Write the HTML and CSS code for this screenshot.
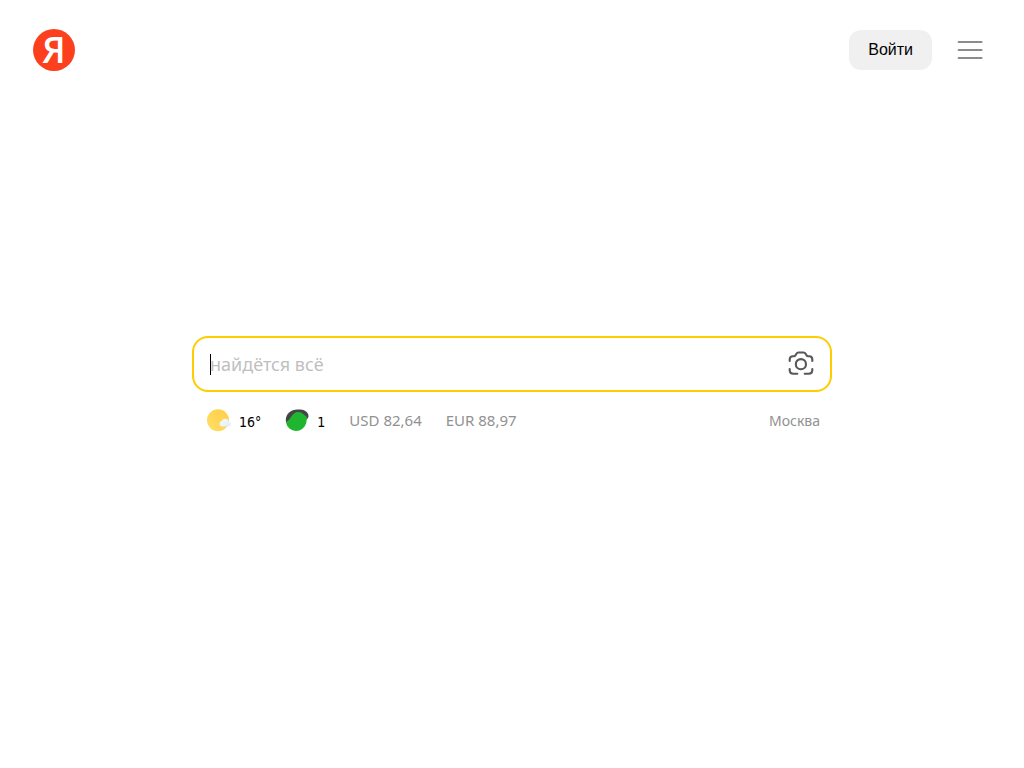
FILE: index.html
```html
<!DOCTYPE html>
<html lang="ru">
<head>
<meta charset="UTF-8">
<meta name="viewport" content="width=device-width, initial-scale=1.0">
<title>Яндекс</title>
<link rel="stylesheet" href="styles.css">
</head>
<body>

<header class="header">
    <a class="logo" href="#">Я</a>
    <div class="header-actions">
        <button class="login-btn" type="button">Войти</button>
        <button class="menu-btn" type="button" aria-label="Меню">
            <svg width="26" height="20" viewBox="0 0 26 20" fill="none" stroke="#8c8c8c" stroke-width="2.2" stroke-linecap="round">
                <path d="M1.700 2h22.800M1.700 10h22.800M1.700 18h22.800"/>
            </svg>
        </button>
    </div>
</header>

<main class="main">
    <form class="search" action="#">
        <span class="caret"></span>
        <input class="search-input" type="text" name="text" placeholder="найдётся всё" aria-label="Запрос" autocomplete="off">
        <button class="camera-btn" type="button" aria-label="Поиск по картинке">
            <svg width="26" height="26" viewBox="0 0 26 26" fill="none" stroke="#575757" stroke-width="2.1" stroke-linecap="round" stroke-linejoin="round">
                <path d="M1.700 10V8.500c0-2 1.200-3.300 3.200-3.300h1c.8 0 1.200-.3 1.600-1l.9-1.400c.5-.8 1.100-1.300 2-1.300h5.200c.9 0 1.500.5 2 1.300l.9 1.400c.4.7.8 1 1.600 1h1c2 0 3.200 1.300 3.200 3.300V10"/>
                <path d="M1.700 18v1c0 2.600 1.300 3.800 3.800 3.800H9.300M24.300 18v1c0 2.600-1.300 3.800-3.800 3.800H16.700"/>
                <circle cx="12.900" cy="13.200" r="5.100"/>
            </svg>
        </button>
    </form>

    <div class="informers">
        <a class="informer" href="#">
            <svg width="24" height="24" viewBox="0 0 24 24">
                <defs>
                    <linearGradient id="sun" x1="0" y1="1" x2="1" y2="0">
                        <stop offset="0" stop-color="#ffdf69"/>
                        <stop offset="1" stop-color="#ffce45"/>
                    </linearGradient>
                    <linearGradient id="cloud" x1="0" y1="0" x2="1" y2="1">
                        <stop offset="0" stop-color="#f8fbff"/>
                        <stop offset="1" stop-color="#dfebfb"/>
                    </linearGradient>
                </defs>
                <circle cx="11" cy="12.300" r="11" fill="url(#sun)"/>
                <path d="M15 18.500a2.800 2.800 0 0 1-.3-5.500 3.900 3.900 0 0 1 7.300.7 2.500 2.500 0 0 1-.3 4.800z" fill="url(#cloud)"/>
            </svg>
            <span class="informer-value">16°</span>
        </a>
        <a class="informer" href="#">
            <svg width="24" height="24" viewBox="0 0 24 24">
                <path d="M1 14C-.3 7 5 1.500 12.500 1.500h3c5 0 9.500 4.500 7.500 8.500l-2 2z" fill="#454545"/>
                <path d="M1.500 13.500c2-.8 3-2.200 4.300-4.200C8 6 10 4 13 4c3.800 0 5.500 2.400 8 4.300 1.100.8 1.200 1.700.8 2.900-.4 1.400-.2 2.300-.6 3.800A10.300 10.300 0 0 1 1 14.500c0-.5.1-.8.5-1z" fill="#20b52e"/>
            </svg>
            <span class="informer-value">1</span>
        </a>
        <a class="informer rate" href="#">USD 82,64</a>
        <a class="informer rate" href="#">EUR 88,97</a>
        <a class="region" href="#">Москва</a>
    </div>
</main>

</body>
</html>
```
FILE: styles.css
```css
* {
    box-sizing: border-box;
}

body {
    display: flex;
    flex-direction: column;
    min-height: 100vh;
    margin: 0;
    background-color: #fff;
    color: #000;
    font-family: "Noto Sans", sans-serif;
}

a {
    color: inherit;
    text-decoration: none;
}

button {
    padding: 0;
    border: none;
    background: none;
    cursor: pointer;
}

svg {
    display: block;
}

/* Header */
.header {
    display: flex;
    justify-content: space-between;
    align-items: center;
    height: 100px;
    padding: 0 41px 0 33px;
}

.logo {
    display: flex;
    justify-content: center;
    align-items: center;
    width: 42px;
    height: 42px;
    border-radius: 50%;
    background-color: #fc3f1d;
    color: #fff;
    font: 600 36px/42px "Open Sans", "Noto Sans", sans-serif;
}

.header-actions {
    display: flex;
    align-items: center;
    gap: 25px;
}

.login-btn {
    height: 40px;
    padding: 0 19px;
    border-radius: 12px;
    background-color: #f0f0f0;
    color: #000;
    font: 16px "Liberation Sans", sans-serif;
}

/* Search */
.main {
    display: flex;
    flex: 1;
    flex-direction: column;
    justify-content: center;
    width: 100%;
    max-width: 640px;
    margin: 0 auto;
    padding-bottom: 100px;
}

.search {
    position: relative;
    display: flex;
    align-items: center;
    height: 56px;
    padding: 0 16px;
    border: 2px solid #fc0;
    border-radius: 16px;
}

.search-input {
    flex: 1;
    min-width: 0;
    height: 40px;
    padding: 0;
    border: none;
    outline: none;
    background: none;
    color: #000;
    font: 18px "Noto Sans", sans-serif;
}

.search-input::placeholder {
    color: #bfbfbf;
    opacity: 1;
}

.caret {
    position: absolute;
    top: 16px;
    left: 16px;
    width: 1px;
    height: 21px;
    background-color: #000;
}

/* Weather, traffic, rates */
.informers {
    display: flex;
    align-items: center;
    gap: 24px;
    height: 24px;
    margin-top: 16px;
    padding: 0 12px 0 15px;
    color: #919191;
    font-size: 14px;
}

.informer {
    display: flex;
    align-items: center;
    gap: 8px;
}

.informer-value {
    padding-top: 4px;
    color: #000;
    font: 14px/20px "DejaVu Sans Condensed", "Liberation Sans", sans-serif;
}

.rate {
    font-size: 15px;
}

.region {
    margin-left: auto;
}
```
